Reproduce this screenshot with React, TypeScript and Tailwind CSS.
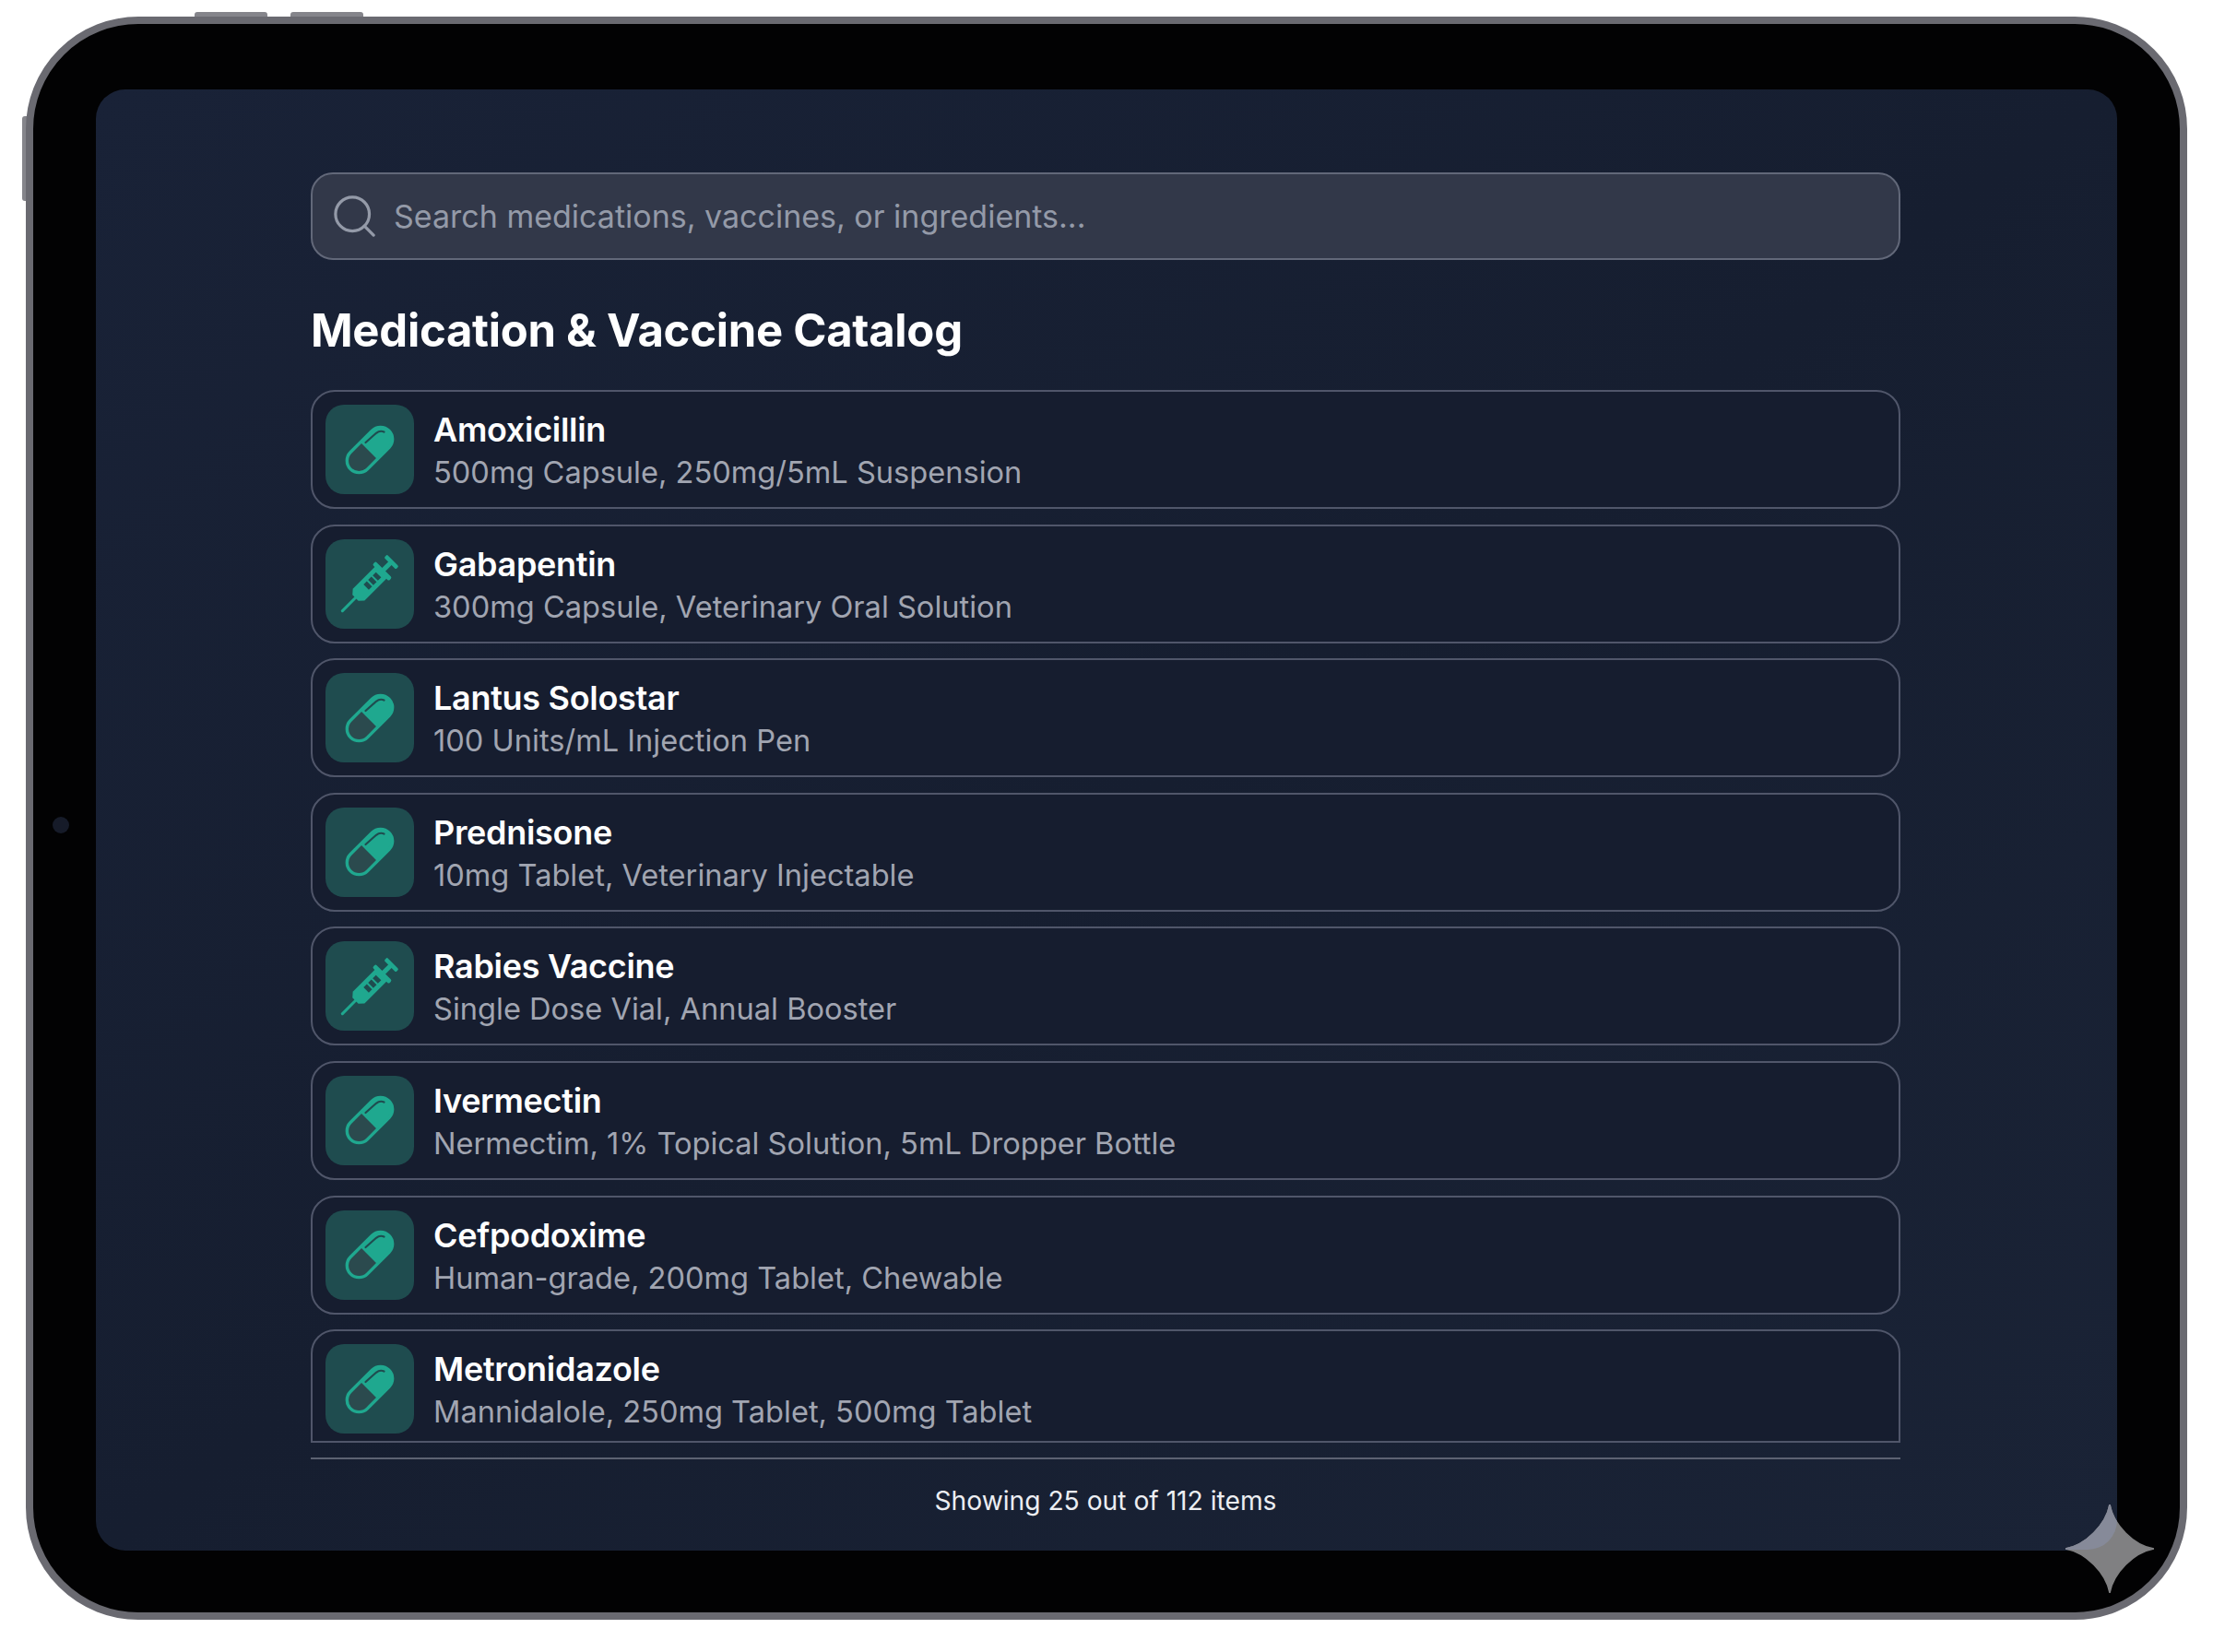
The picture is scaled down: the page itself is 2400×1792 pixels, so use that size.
import { Search } from "lucide-react";

function PillIcon() {
  return (
    <svg width="96" height="96" viewBox="0 0 96 96" fill="none">
      <g transform="rotate(45 48 48)">
        <rect x="35" y="18.5" width="26" height="59" rx="13" fill="#2b4a4e" />
        <path d="M35 48V31.5a13 13 0 0 1 26 0V48Z" fill="#1fa88f" />
        <rect x="35" y="18.5" width="26" height="59" rx="13" fill="none" stroke="#1fa88f" strokeWidth="3.4" />
        <path d="M35 48H61" stroke="#1fa88f" strokeWidth="2.8" />
      </g>
      <path d="M43.5 40 L55 29.8 Q59 26.5 63.5 28.5" stroke="#1f4c4f" strokeWidth="2.2" strokeLinecap="round" fill="none" />
    </svg>
  );
}

function SyringeIcon() {
  return (
    <svg width="96" height="96" viewBox="0 0 96 96" fill="none">
      <g transform="rotate(45 48 48)">
        <rect x="39" y="12.5" width="18" height="4.6" rx="1.6" fill="#1fa88f" />
        <rect x="45.5" y="15" width="5" height="13" fill="#1fa88f" />
        <rect x="35.5" y="26.5" width="25" height="5" rx="1.8" fill="#1fa88f" />
        <path d="M39 30H57V65L52.5 70H43.5L39 65Z" fill="#1fa88f" />
        <rect x="46.5" y="68" width="3" height="23.5" rx="1.3" fill="#1fa88f" />
        <rect x="44" y="34.5" width="8" height="5" fill="#1f4c4f" />
        <rect x="44" y="41.5" width="8" height="5" fill="#1f4c4f" />
        <rect x="44" y="48.5" width="8" height="5" fill="#1f4c4f" />
      </g>
    </svg>
  );
}

const items: { name: string; sub: string; kind: "pill" | "syringe" }[] = [
  { name: "Amoxicillin", sub: "500mg Capsule, 250mg/5mL Suspension", kind: "pill" },
  { name: "Gabapentin", sub: "300mg Capsule, Veterinary Oral Solution", kind: "syringe" },
  { name: "Lantus Solostar", sub: "100 Units/mL Injection Pen", kind: "pill" },
  { name: "Prednisone", sub: "10mg Tablet, Veterinary Injectable", kind: "pill" },
  { name: "Rabies Vaccine", sub: "Single Dose Vial, Annual Booster", kind: "syringe" },
  { name: "Ivermectin", sub: "Nermectim, 1% Topical Solution, 5mL Dropper Bottle", kind: "pill" },
  { name: "Cefpodoxime", sub: "Human-grade, 200mg Tablet, Chewable", kind: "pill" },
  { name: "Metronidazole", sub: "Mannidalole, 250mg Tablet, 500mg Tablet", kind: "pill" },
];

function Row({ name, sub, kind }: { name: string; sub: string; kind: "pill" | "syringe" }) {
  return (
    <div className="flex h-[129px] shrink-0 items-center gap-[21px] rounded-[26px] border-2 border-[#50566a] bg-[#161d2f] pl-[14px] last:rounded-b-[6px]">
      <div className="flex h-[97px] w-[96px] shrink-0 items-center justify-center rounded-[20px] bg-[#1f4c4f]">
        {kind === "pill" ? <PillIcon /> : <SyringeIcon />}
      </div>
      <div className="flex flex-col pt-[3px]">
        <div className="text-[36px] leading-[46px] font-semibold tracking-[-0.3px] text-white">{name}</div>
        <div className="text-[32.6px] leading-[46px] text-[#a1a5b1]">{sub}</div>
      </div>
    </div>
  );
}

export default function App() {
  return (
    <div className="relative h-[1792px] w-[2400px] bg-white pt-[18px] pl-[28px] font-['Inter',sans-serif]">
      <div className="absolute top-[13px] left-[211px] h-[8px] w-[79px] rounded-t-[3px] bg-[#85858b]" />
      <div className="absolute top-[13px] left-[315px] h-[8px] w-[79px] rounded-t-[3px] bg-[#85858b]" />
      <div className="absolute top-[126px] left-[24px] h-[92px] w-[8px] rounded-l-[3px] bg-[#85858b]" />
      <div className="relative h-[1739px] w-[2344px] rounded-[122px] border-8 border-[#6a6a71] bg-[#020203] pt-[71px] pl-[68px]">
        <div className="absolute top-[860px] left-[21px] h-[18px] w-[18px] rounded-full bg-[#161b29]" />
        <div className="flex h-[1585px] w-[2192px] flex-col rounded-[32px] bg-gradient-to-br from-[#192237] via-[#161e30] to-[#1a2336] pt-[90px] pr-[235px] pl-[233px]">
          <div className="flex h-[95px] shrink-0 items-center gap-[15px] rounded-[24px] border-2 border-[#626879] bg-[#323849] pl-[18px] text-[#949aa8]">
            <Search size={55} strokeWidth={1.4} />
            <span className="text-[34px]">Search medications, vaccines, or ingredients...</span>
          </div>
          <h1 className="mt-[46px] mb-[35px] h-[60px] pt-[1px] text-[49px] leading-[60px] font-bold tracking-[-0.28px] text-white">
            Medication &amp; Vaccine Catalog
          </h1>
          <div className="flex h-[1142px] shrink-0 flex-col gap-[16.6px] overflow-hidden border-b-2 border-[#50566a]">
            {items.map((it) => (
              <Row key={it.name} {...it} />
            ))}
          </div>
          <div className="mt-[16px] h-[2px] shrink-0 bg-[#5c6272]" />
          <div className="mt-[27px] text-center text-[28.2px] leading-[36px] text-[#eceef2]">
            Showing 25 out of 112 items
          </div>
        </div>
      </div>
      <svg className="absolute top-[1632px] left-[2240px]" width="96" height="96" viewBox="0 0 96 96">
        <defs>
          <clipPath id="screen-corner">
            <rect x="-100" y="-100" width="156" height="149" rx="32" />
          </clipPath>
        </defs>
        <path d="M48 0C52 22 74 44.7 96 48C74 52 52 74 48 96C44 74 22 52 0 48C22 44 44 22 48 0Z" fill="#808082" stroke="#808082" strokeWidth="1.5" strokeLinejoin="round" />
        <path d="M48 0C52 22 74 44.7 96 48C74 52 52 74 48 96C44 74 22 52 0 48C22 44 44 22 48 0Z" fill="#868a99" stroke="#868a99" strokeWidth="1.5" strokeLinejoin="round" clipPath="url(#screen-corner)" />
      </svg>
    </div>
  );
}
